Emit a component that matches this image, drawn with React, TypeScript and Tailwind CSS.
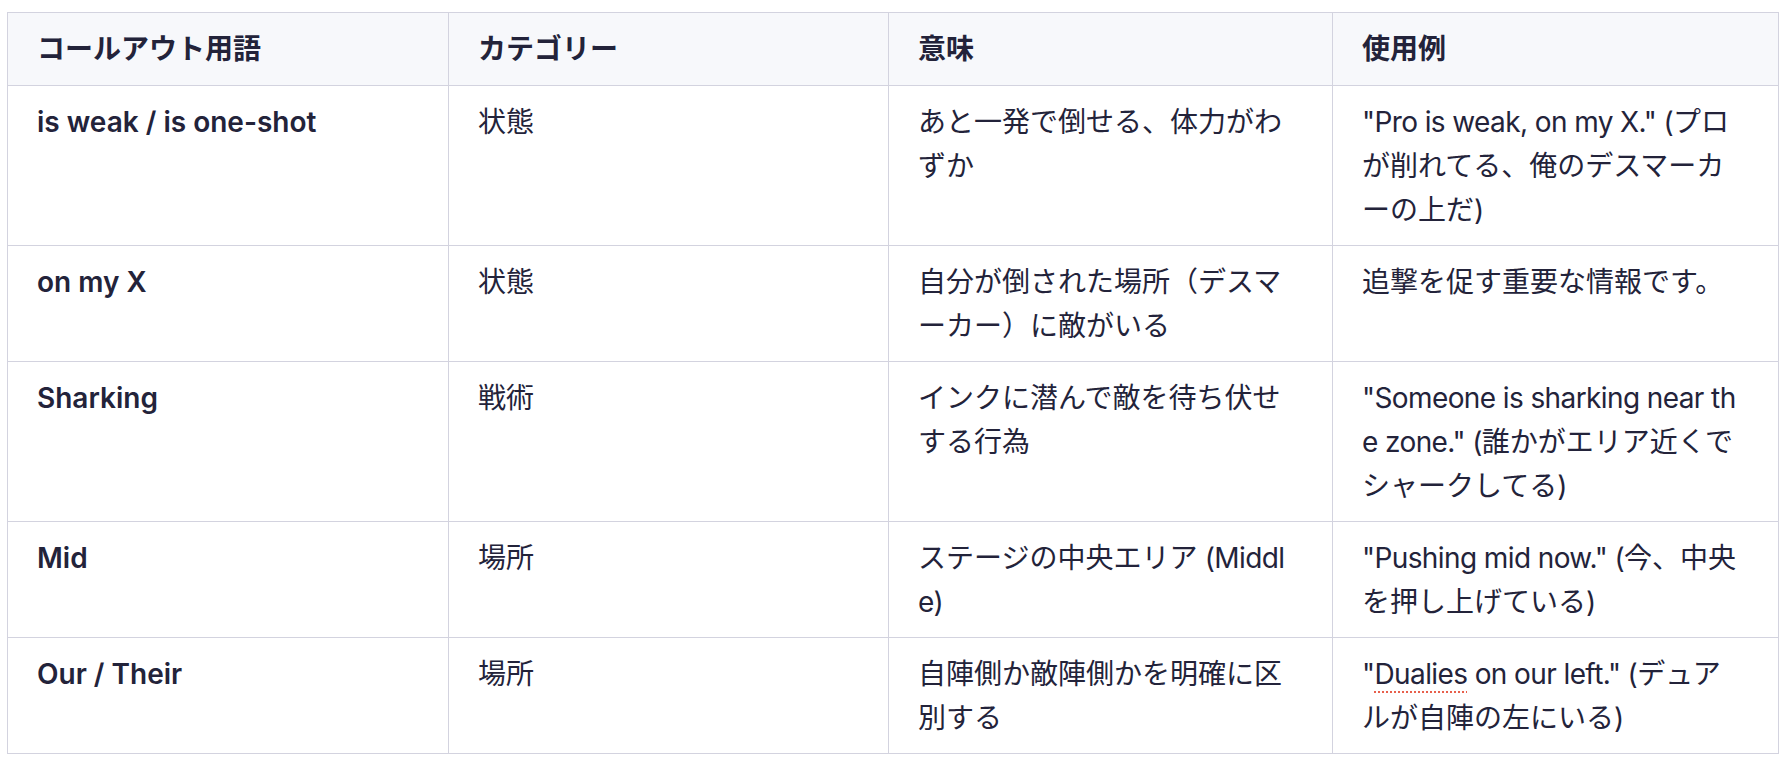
import React from "react";

type Row = {
  term: string;
  cat: string;
  meaning: string[];
  example: string[];
};

const rows: Row[] = [
  {
    term: "is weak / is one-shot",
    cat: "状態",
    meaning: ["あと一発で倒せる、体力がわ", "ずか"],
    example: ["\"Pro is weak, on my X.\" (プロ", "が削れてる、俺のデスマーカ", "ーの上だ)"],
  },
  {
    term: "on my X",
    cat: "状態",
    meaning: ["自分が倒された場所（デスマ", "ーカー）に敵がいる"],
    example: ["追撃を促す重要な情報です。"],
  },
  {
    term: "Sharking",
    cat: "戦術",
    meaning: ["インクに潜んで敵を待ち伏せ", "する行為"],
    example: ["\"Someone is sharking near th", "e zone.\" (誰かがエリア近くで", "シャークしてる)"],
  },
  {
    term: "Mid",
    cat: "場所",
    meaning: ["ステージの中央エリア (Middl", "e)"],
    example: ["\"Pushing mid now.\" (今、中央", "を押し上げている)"],
  },
  {
    term: "Our / Their",
    cat: "場所",
    meaning: ["自陣側か敵陣側かを明確に区", "別する"],
    example: ["\"Dualies on our left.\" (デュア", "ルが自陣の左にいる)"],
  },
];

const headers = ["コールアウト用語", "カテゴリー", "意味", "使用例"];

function Latin({ text }: { text: string }) {
  if (text.includes("Dualies")) {
    const [before, after] = text.split("Dualies");
    return (
      <span className="tracking-[-0.6px]">
        {before}
        <span className="underline decoration-dotted decoration-[#e8604c] decoration-2 underline-offset-[7px]">
          Dualies
        </span>
        {after}
      </span>
    );
  }
  return <span className="tracking-[-0.6px]">{text}</span>;
}

function Line({ text }: { text: string }) {
  const parts = text.split(/([\x20-\x7E]+)/).filter((p) => p.length > 0);
  return (
    <div className="whitespace-pre">
      {parts.map((p, i) =>
        /^[\x20-\x7E]+$/.test(p) ? <Latin key={i} text={p} /> : <span key={i}>{p}</span>
      )}
    </div>
  );
}

const cell = "border border-[#d3d3df] pl-[29px] pr-[32px] pt-[14px] pb-[13px] align-top";

export default function App() {
  return (
    <div
      className="min-h-[760px] w-[1786px] bg-white pl-[7px] pr-[8px] pt-[12px] text-[#23233a]"
      style={{ fontFamily: 'Inter, "Noto Sans CJK JP", sans-serif' }}
    >
      <table className="w-[1771px] table-fixed border-collapse text-[28px] leading-[44px]">
        <colgroup>
          <col className="w-[441px]" />
          <col className="w-[440px]" />
          <col className="w-[444px]" />
          <col className="w-[446px]" />
        </colgroup>
        <thead>
          <tr className="bg-[#f7f8fb]">
            {headers.map((h) => (
              <th
                key={h}
                className="border border-[#d3d3df] pl-[29px] pr-[32px] py-[14px] text-left align-middle font-semibold"
              >
                {h}
              </th>
            ))}
          </tr>
        </thead>
        <tbody>
          {rows.map((r, i) => (
            <tr key={i}>
              <td className={`${cell} font-semibold`}>{r.term}</td>
              <td className={cell}>{r.cat}</td>
              <td className={cell}>
                {r.meaning.map((l, j) => (
                  <Line key={j} text={l} />
                ))}
              </td>
              <td className={cell}>
                {r.example.map((l, j) => (
                  <Line key={j} text={l} />
                ))}
              </td>
            </tr>
          ))}
        </tbody>
      </table>
    </div>
  );
}
